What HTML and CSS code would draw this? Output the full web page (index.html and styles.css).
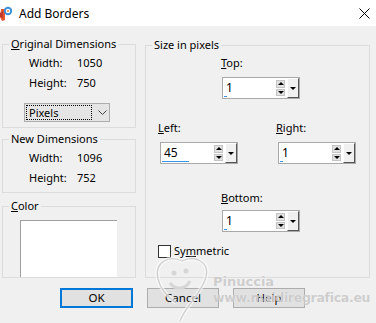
FILE: index.html
```html
<!DOCTYPE html>
<html lang="en">
<head>
    <meta charset="UTF-8">
    <meta name="viewport" content="width=device-width, initial-scale=1.0">
    <title>Add Borders</title>
    <link rel="stylesheet" href="styles.css">
</head>
<body>
    <div class="titlebar">
        <svg class="app-icon" width="12" height="17" viewBox="0 0 12 17">
            <path d="M1 4 L5 4 L5 15 L2 16 L0 12 Z" fill="#e4572e"/>
            <path d="M0 8 L3 6 L3 13 L0 12 Z" fill="#c0392b"/>
            <circle cx="8" cy="6" r="3.2" fill="none" stroke="#3a8fd8" stroke-width="2"/>
            <circle cx="8" cy="6" r="1" fill="#f28c28"/>
        </svg>
        <span class="title">Add Borders</span>
        <svg class="close" width="11" height="11" viewBox="0 0 11 11">
            <path d="M0.5 0.5 L10.5 10.5 M10.5 0.5 L0.5 10.5" stroke="#000" stroke-width="1"/>
        </svg>
    </div>

    <div class="dialog">
        <div class="left-col">
            <fieldset class="group group-orig">
                <legend><u>O</u>riginal Dimensions</legend>
                <div class="dim-row"><span class="dim-label">Width:</span><span>1050</span></div>
                <div class="dim-row"><span class="dim-label">Height:</span><span>750</span></div>
                <div class="select">
                    <span class="select-text">Pixels</span>
                    <svg width="9" height="6" viewBox="0 0 9 6"><path d="M0.5 0.5 L4.5 4.5 L8.5 0.5" fill="none" stroke="#444" stroke-width="1"/></svg>
                </div>
            </fieldset>

            <fieldset class="group group-new">
                <legend>New Dimensions</legend>
                <div class="dim-row"><span class="dim-label">Width:</span><span>1096</span></div>
                <div class="dim-row"><span class="dim-label">Height:</span><span>752</span></div>
            </fieldset>

            <fieldset class="group group-color">
                <legend><u>C</u>olor</legend>
                <div class="swatch"></div>
            </fieldset>
        </div>

        <fieldset class="group group-size">
            <legend>Size in pixels</legend>

            <div class="size-row row-top">
                <div class="field">
                    <div class="field-label"><u>T</u>op:</div>
                    <div class="spin">
                        <div class="spin-field"><span class="spin-value">1</span><span class="spin-bar" style="width:3px"></span></div>
                        <div class="spin-arrows"><span class="arrow up"></span><span class="arrow down"></span></div>
                        <div class="spin-drop"><span class="arrow down"></span></div>
                    </div>
                </div>
            </div>

            <div class="size-row row-middle">
                <div class="field">
                    <div class="field-label"><u>L</u>eft:</div>
                    <div class="spin">
                        <div class="spin-field"><span class="spin-value">45</span><span class="spin-bar" style="width:27px"></span></div>
                        <div class="spin-arrows"><span class="arrow up"></span><span class="arrow down"></span></div>
                        <div class="spin-drop"><span class="arrow down"></span></div>
                    </div>
                </div>
                <div class="field">
                    <div class="field-label"><u>R</u>ight:</div>
                    <div class="spin">
                        <div class="spin-field"><span class="spin-value">1</span><span class="spin-bar" style="width:3px"></span></div>
                        <div class="spin-arrows"><span class="arrow up"></span><span class="arrow down"></span></div>
                        <div class="spin-drop"><span class="arrow down"></span></div>
                    </div>
                </div>
            </div>

            <div class="size-row row-bottom">
                <div class="field">
                    <div class="field-label"><u>B</u>ottom:</div>
                    <div class="spin">
                        <div class="spin-field"><span class="spin-value">1</span><span class="spin-bar" style="width:3px"></span></div>
                        <div class="spin-arrows"><span class="arrow up"></span><span class="arrow down"></span></div>
                        <div class="spin-drop"><span class="arrow down"></span></div>
                    </div>
                </div>
            </div>

            <label class="check"><span class="check-box"></span>Sy<u>m</u>metric</label>
        </fieldset>
    </div>

    <div class="buttons">
        <div class="btn btn-default">OK</div>
        <div class="btn">Cancel</div>
        <div class="btn">Help</div>
    </div>

    <!-- watermark over the dialog -->
    <div class="watermark">
        <svg class="wm-logo" width="70" height="70" viewBox="0 0 70 70">
            <path d="M30 68 C36 52 52 40 56 24 C60 8 44 2 32 8 C20 2 4 8 8 26 C10 36 18 44 26 50" fill="none" stroke="#fff" stroke-width="4" opacity="0.6"/>
            <path d="M30 68 C36 52 52 40 56 24 C60 8 44 2 32 8 C20 2 4 8 8 26 C10 36 18 44 26 50" fill="none" stroke="#cfcfcf" stroke-width="1.3"/>
            <circle cx="24" cy="20" r="2.5" fill="#d6d6d6"/>
            <circle cx="36" cy="18" r="2.5" fill="#d6d6d6"/>
            <path d="M20 30 C26 38 36 36 40 28" fill="none" stroke="#d6d6d6" stroke-width="3"/>
        </svg>
        <div class="wm-name">Pinuccia</div>
        <div class="wm-url">www.maidiregrafica.eu</div>
    </div>
</body>
</html>
```

FILE: styles.css
```css
/* Add Borders dialog */
html, body {
    margin: 0;
    width: 376px;
    height: 323px;
    overflow: hidden;
}
body {
    position: relative;
    background-color: #f0f0f0;
    font-family: "Noto Sans", "Open Sans", sans-serif;
    font-size: 11px;
    color: #000;
}
u {
    text-decoration: underline;
    text-underline-offset: 1px;
}

.titlebar {
    height: 26px;
    background-color: #ffffff;
    display: flex;
    align-items: center;
}
.app-icon {
    margin-top: 1px;
}
.title {
    margin-left: 7px;
    font-size: 12px;
    flex: 1;
}
.close {
    margin-right: 6px;
}

.dialog {
    display: grid;
    grid-template-columns: 134px 225px;
    column-gap: 9px;
    padding: 10px 0 0 2px;
}
.left-col {
    display: flex;
    flex-direction: column;
}

.group {
    margin: 0;
    padding: 0;
    border: 1px solid #dcdcdc;
    min-width: 0;
}
.group legend {
    margin-left: 6px;
    padding: 0 2px;
    line-height: 16px;
}

.group-orig {
    padding-bottom: 5px;
}
.group-new {
    margin-top: 3px;
    padding-bottom: 4px;
}
.group-color {
    margin-top: 5px;
    flex: 1;
}

.dim-row {
    display: flex;
    height: 20px;
    line-height: 20px;
    padding-left: 26px;
}
.group-orig .dim-row:first-of-type,
.group-new .dim-row:first-of-type {
    margin-top: 1px;
}
.dim-label {
    width: 48px;
}

.select {
    margin: 10px 0 0 21px;
    width: 86px;
    height: 19px;
    box-sizing: border-box;
    border: 1px solid #adadad;
    background-color: #e5e5e5;
    display: flex;
    align-items: center;
    padding: 1px;
}
.select-text {
    width: 66px;
    height: 15px;
    line-height: 14px;
    padding-left: 2px;
    border: 1px dotted #000;
    box-sizing: border-box;
}
.select svg {
    margin-left: 6px;
}

.swatch {
    margin: 6px 0 0 17px;
    width: 97px;
    height: 57px;
    box-sizing: border-box;
    background-color: #ffffff;
    border-top: 1px solid #a0a0a0;
    border-left: 1px solid #a0a0a0;
}

/* Size in pixels */
.group-size {
    margin-top: 1px;
}
.size-row {
    display: flex;
}
.row-top {
    margin: 2px 0 0 76px;
}
.row-middle {
    margin: 21px 0 0 14px;
    gap: 40px;
}
.row-bottom {
    margin: 26px 0 0 76px;
}
.row-bottom .spin {
    margin-top: 4px;
}
.field-label {
    line-height: 16px;
    margin-left: -1px;
}
.row-middle .field-label {
    margin-left: -2px;
}

.spin {
    margin-top: 6px;
    width: 78px;
    height: 22px;
    box-sizing: border-box;
    border: 1px solid #a9a9a9;
    background-color: #ffffff;
    display: flex;
}
.spin-field {
    flex: 1;
    display: flex;
    flex-direction: column;
    justify-content: space-between;
    padding-left: 3px;
}
.spin-value {
    line-height: 16px;
    padding-top: 2px;
    font-size: 12px;
}
.spin-bar {
    height: 2px;
    margin-left: -2px;
    margin-bottom: 1px;
    background-color: #3c94e8;
}
.spin-arrows {
    width: 9px;
    display: flex;
    flex-direction: column;
    gap: 1px;
    margin: 2px 0;
}
.spin-arrows span {
    flex: 1;
    background-color: #e2e2e2;
    border: 1px solid #c4c4c4;
}
.spin-drop {
    width: 10px;
    margin: 0 0 0 2px;
    background-color: #f0f0f0;
    border-top: 1px solid #ffffff;
    border-left: 1px solid #ffffff;
    border-right: 1px solid #555;
    border-bottom: 1px solid #555;
}
.arrow {
    display: flex;
    align-items: center;
    justify-content: center;
}
.spin-drop .arrow {
    height: 100%;
}
.arrow::after {
    content: "";
    display: block;
    width: 0;
    height: 0;
    border-left: 3px solid transparent;
    border-right: 3px solid transparent;
}
.arrow.up::after {
    border-bottom: 3px solid #000;
}
.arrow.down::after {
    border-top: 3px solid #000;
}

.check {
    display: flex;
    align-items: center;
    margin: 12px 0 0 12px;
    line-height: 14px;
}
.check-box {
    width: 13px;
    height: 13px;
    box-sizing: border-box;
    border: 1px solid #333;
    background-color: #ffffff;
    margin-right: 3px;
}

/* bottom buttons */
.buttons {
    display: flex;
    gap: 14px;
    padding: 10px 0 0 60px;
}
.btn {
    width: 72px;
    height: 20px;
    box-sizing: border-box;
    border: 1px solid #adadad;
    background-color: #e1e1e1;
    text-align: center;
    line-height: 18px;
    font-size: 11.5px;
}
.btn-default {
    width: 73px;
    border: 2px solid #0078d7;
    line-height: 16px;
}

/* watermark */
.watermark {
    position: absolute;
    left: 150px;
    top: 253px;
    width: 226px;
    height: 70px;
    pointer-events: none;
}
.wm-logo {
    position: absolute;
    left: 0;
    top: 0;
}
.wm-name, .wm-url {
    position: absolute;
    font-family: "DejaVu Sans", sans-serif;
    font-weight: bold;
    color: rgba(190, 190, 190, 0.75);
    text-shadow: 0 0 1px rgba(255, 255, 255, 0.8);
    white-space: nowrap;
}
.wm-name {
    left: 63px;
    top: 21px;
    font-size: 13px;
}
.wm-url {
    left: 63px;
    top: 37px;
    font-size: 12.5px;
    letter-spacing: -0.3px;
}
```
